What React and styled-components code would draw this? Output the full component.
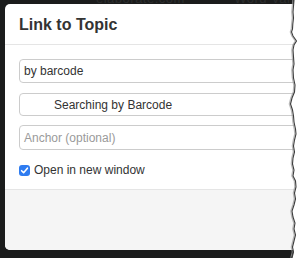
import React from "react";
import styled, { createGlobalStyle } from "styled-components";

const Global = createGlobalStyle`
  html, body { margin: 0; padding: 0; background: #ffffff; }
  body { font-family: "Liberation Sans", Arial, sans-serif; }
`;

const Stage = styled.div`
  position: relative;
  width: 300px;
  height: 258px;
  overflow: hidden;
  background: #ffffff;
`;

const Backdrop = styled.div`
  position: relative;
  width: 300px;
  height: 258px;
  background: #1b1c1c;
  padding: 4px 0 0 5px;
  box-sizing: border-box;
  overflow: hidden;
`;

const FaintText = styled.div`
  position: absolute;
  top: -9px;
  left: 96px;
  font-size: 13px;
  color: #2c2d2d;
  letter-spacing: 0.5px;
  white-space: nowrap;
`;

const Modal = styled.div`
  position: relative;
  width: 340px;
  height: 246px;
  background: #ffffff;
  border-radius: 5px;
  display: flex;
  flex-direction: column;
  overflow: hidden;
`;

const Header = styled.div`
  height: 41px;
  box-sizing: border-box;
  padding: 0 14px;
  display: flex;
  align-items: center;
  border-bottom: 1px solid #e5e5e5;
`;

const Title = styled.h3`
  margin: 0;
  padding-top: 1px;
  font-size: 16px;
  font-weight: bold;
  color: #333333;
`;

const Body = styled.div`
  padding: 14px 14px 0 14px;
  display: flex;
  flex-direction: column;
  height: 144px;
  box-sizing: border-box;
`;

const Field = styled.div`
  height: ${(p) => p.$h || 24}px;
  box-sizing: border-box;
  border: 1px solid #cccccc;
  border-radius: 4px;
  padding-left: ${(p) => p.$pad || 4}px;
  display: flex;
  align-items: center;
  font-size: 12px;
  color: ${(p) => (p.$placeholder ? "#9a9a9a" : "#333333")};
  margin-bottom: ${(p) => p.$mb || 0}px;
`;

const CheckRow = styled.label`
  display: flex;
  align-items: center;
  gap: 4px;
  margin-top: 13px;
  font-size: 12px;
  color: #333333;
`;

const Check = styled.span`
  width: 11px;
  height: 11px;
  border-radius: 3px;
  background: #2f7cf0;
  display: inline-flex;
  align-items: center;
  justify-content: center;
`;

const Footer = styled.div`
  flex: 1;
  background: #f5f5f5;
  border-top: 1px solid #e5e5e5;
`;

const Tear = styled.svg`
  position: absolute;
  top: 0;
  left: 280px;
  width: 20px;
  height: 258px;
`;

const tearPts = [
  [14, 0], [13.5, 6], [13, 12], [13.5, 18], [12.8, 24], [12.5, 29], [11.5, 32],
  [13, 36], [16.5, 41], [14, 45], [13, 50], [13.5, 57], [14, 64], [13, 70],
  [13.5, 78], [15, 85], [14.5, 92], [12, 98], [10.5, 104], [12.5, 110],
  [13.5, 116], [14, 122], [15.5, 129], [16, 134], [14.5, 140], [13.5, 146],
  [14.5, 152], [13, 158], [12.5, 164], [14, 170], [13, 176], [15.5, 181],
  [16, 187], [14.5, 193], [15.5, 199], [14, 205], [12, 211], [13, 217],
  [15, 223], [14, 229], [15.5, 235], [14, 241], [12.5, 247], [13.5, 252], [12, 258],
];

function TornEdge() {
  const line = tearPts.map((p) => p.join(",")).join(" ");
  const fill = `${line} 20,258 20,0`;
  const shadow = tearPts.map(([x, y]) => `${x - 1.2},${y}`).join(" ");
  return (
    <Tear viewBox="0 0 20 258" preserveAspectRatio="none">
      <polyline points={shadow} fill="none" stroke="#9a9a9a" strokeWidth="1.2" opacity="0.7" />
      <polygon points={fill} fill="#ffffff" />
      <polyline points={line} fill="none" stroke="#3c3c3c" strokeWidth="1.1" />
    </Tear>
  );
}

export default function App() {
  return (
    <>
      <Global />
      <Stage>
        <Backdrop>
          <FaintText>elaborate.com &nbsp;&nbsp;&nbsp;&nbsp;&nbsp;&nbsp;&nbsp;&nbsp;&nbsp;&nbsp; Word Variety</FaintText>
          <Modal>
            <Header>
              <Title>Link to Topic</Title>
            </Header>
            <Body>
              <Field $mb={10}>by barcode</Field>
              <Field $h={23} $pad={34} $mb={9}>Searching by Barcode</Field>
              <Field $h={25} $placeholder>Anchor (optional)</Field>
              <CheckRow>
                <Check>
                  <svg width="9" height="9" viewBox="0 0 9 9">
                    <path d="M1.6 4.7 L3.6 6.7 L7.4 2.2" fill="none" stroke="#ffffff" strokeWidth="1.6" strokeLinecap="round" strokeLinejoin="round" />
                  </svg>
                </Check>
                Open in new window
              </CheckRow>
            </Body>
            <Footer />
          </Modal>
        </Backdrop>
        <TornEdge />
      </Stage>
    </>
  );
}
